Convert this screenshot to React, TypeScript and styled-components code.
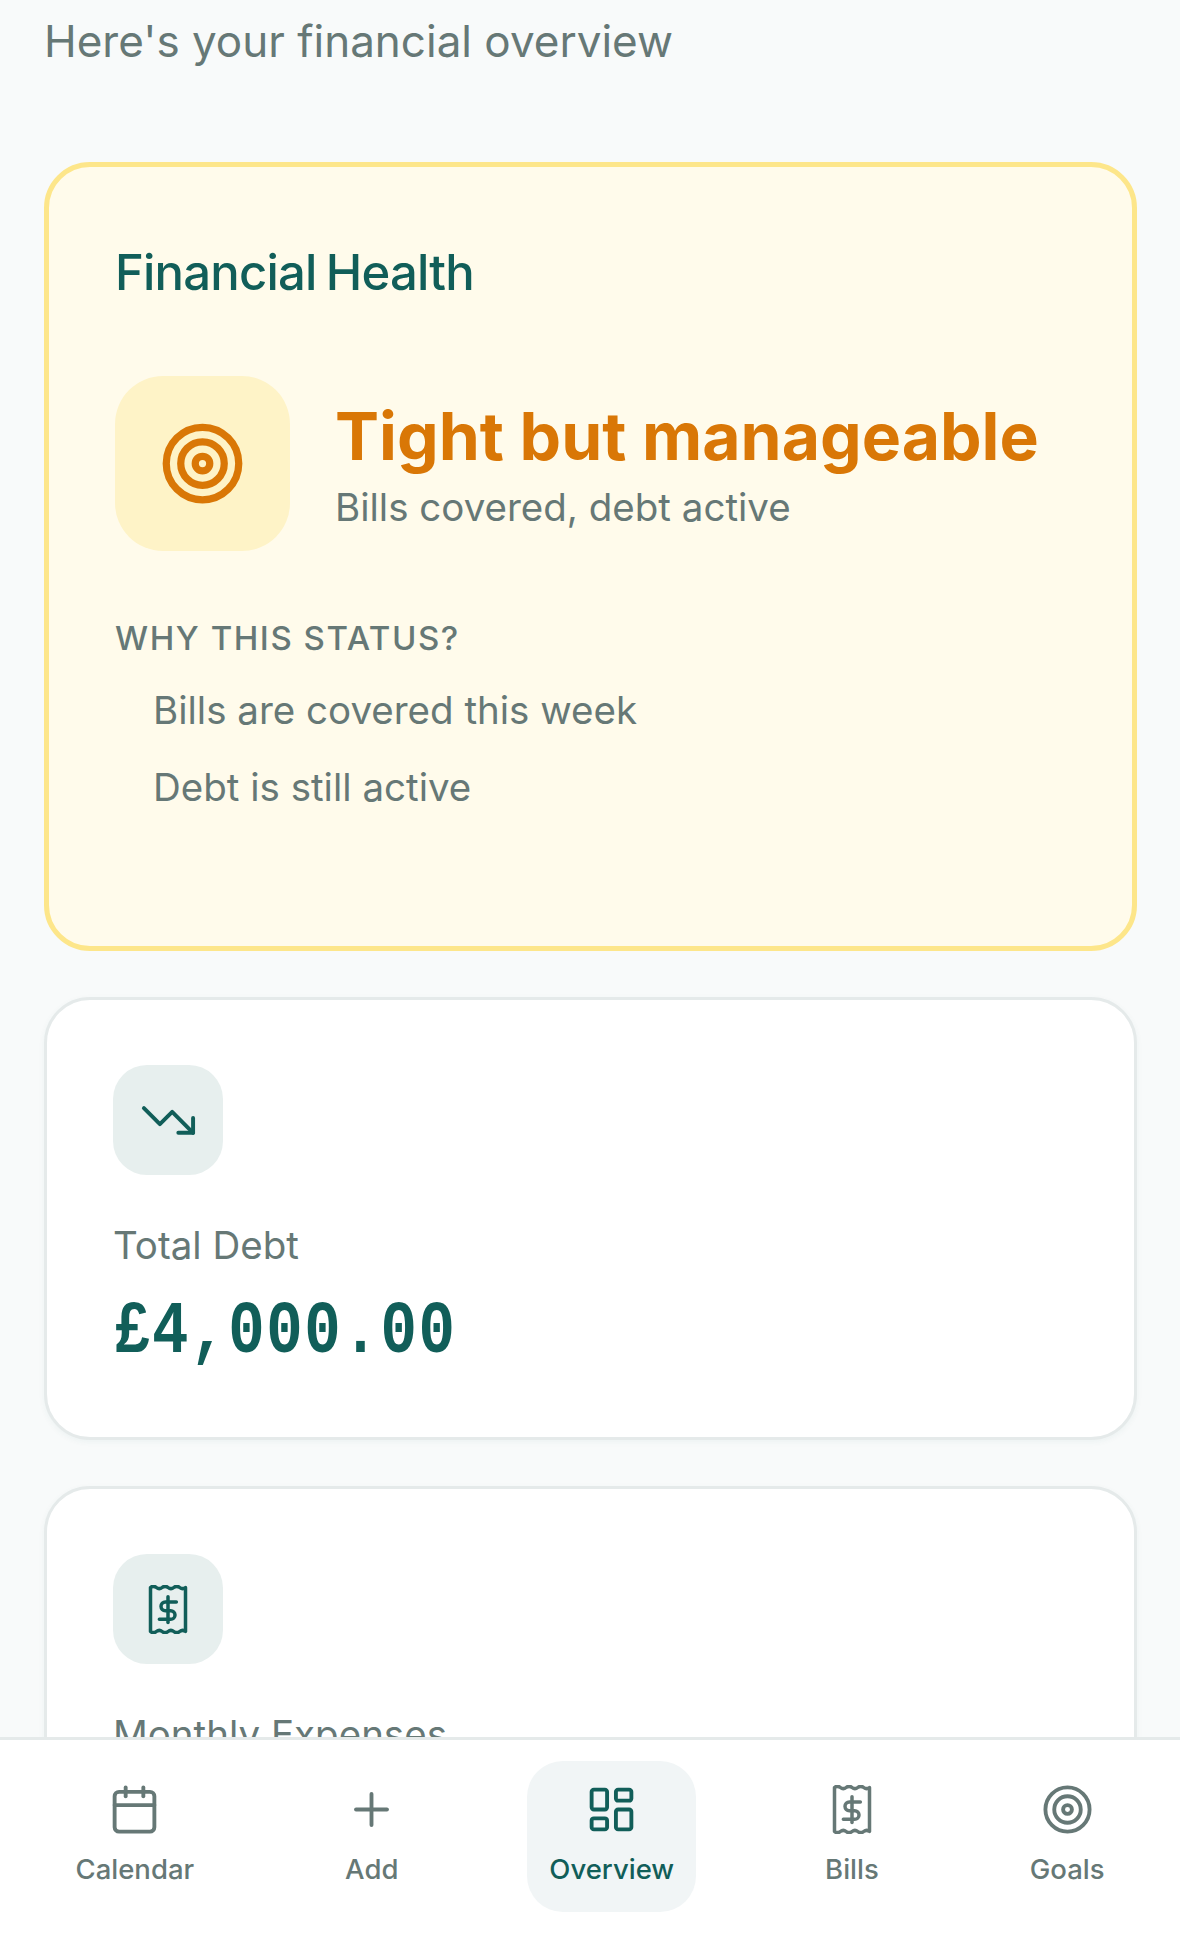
import styled, { createGlobalStyle } from "styled-components";
import { Calendar, LayoutDashboard, Plus, Target, TrendingDown } from "lucide-react";

const GlobalStyle = createGlobalStyle`
  html, body {
    margin: 0;
    padding: 0;
    background: #f8fafa;
  }
  * {
    box-sizing: border-box;
  }
`;

const Page = styled.div`
  width: 1180px;
  height: 1934px;
  display: flex;
  flex-direction: column;
  overflow: hidden;
  background: #f8fafa;
  font-family: Inter, "Liberation Sans", sans-serif;
  color: #667876;
`;

const Content = styled.main`
  flex: 1;
  min-height: 0;
  overflow: hidden;
  padding: 11px 43px 0 44px;
  display: flex;
  flex-direction: column;
  gap: 46px;
`;

const Greeting = styled.p`
  margin: 0 0 45px;
  font-size: 44px;
  line-height: 60px;
`;

const HealthCard = styled.section`
  flex-shrink: 0;
  border: 5px solid #fde68a;
  border-radius: 46px;
  background: #fffbeb;
  padding: 76px 67px 129px 66px;
`;

const HealthTitle = styled.h2`
  margin: 0;
  font-size: 49px;
  line-height: 60px;
  font-weight: 500;
  letter-spacing: -0.8px;
  word-spacing: -3px;
  color: #115e59;
`;

const StatusRow = styled.div`
  display: flex;
  align-items: center;
  gap: 45px;
  margin-top: 73px;
`;

const StatusIcon = styled.div`
  width: 175px;
  height: 175px;
  flex-shrink: 0;
  border-radius: 48px;
  background: #fef3c7;
  color: #d97706;
  display: flex;
  align-items: center;
  justify-content: center;
`;

const StatusText = styled.div`
  display: flex;
  flex-direction: column;
  gap: 5px;
  padding-top: 2px;
`;

const StatusTitle = styled.div`
  font-size: 66px;
  line-height: 80px;
  font-weight: 700;
  color: #d97706;
`;

const StatusSub = styled.div`
  font-size: 38.5px;
  line-height: 52px;
`;

const ReasonsLabel = styled.div`
  margin-top: 64px;
  font-size: 33px;
  line-height: 46px;
  font-weight: 500;
  letter-spacing: 1.55px;
`;

const Reasons = styled.ul`
  list-style: none;
  margin: 19px 0 0;
  padding: 0 0 0 38px;
  display: flex;
  flex-direction: column;
  gap: 17px;
`;

const Reason = styled.li`
  font-size: 38.5px;
  line-height: 60px;
`;

const StatCard = styled.section`
  flex-shrink: 0;
  border: 3px solid #e5eaea;
  border-radius: 46px;
  background: #fff;
  box-shadow: 0 2px 6px rgba(17, 94, 89, 0.05);
  padding: 65px 65px 65px 66px;
`;

const StatIcon = styled.div`
  width: 110px;
  height: 110px;
  border-radius: 34px;
  background: #e7efee;
  color: #115e59;
  display: flex;
  align-items: center;
  justify-content: center;
`;

const StatLabel = styled.div`
  margin-top: 44px;
  font-size: 38.5px;
  line-height: 52px;
`;

const StatValue = styled.div`
  margin: 21px 0 0 1px;
  font-family: "Liberation Mono", monospace;
  font-size: 74px;
  line-height: 80px;
  font-weight: 700;
  letter-spacing: 2px;
  color: #115e59;
  transform: scaleX(0.82);
  transform-origin: left center;
`;

const BottomNav = styled.nav`
  height: 197px;
  flex-shrink: 0;
  border-top: 3px solid #e5eaea;
  background: #fff;
  padding-top: 21px;
  display: flex;
  align-items: flex-start;
  justify-content: space-around;
`;

const NavItem = styled.div<{ $active?: boolean }>`
  height: 151px;
  padding: 24px 22px 0;
  border-radius: 36px;
  display: flex;
  flex-direction: column;
  align-items: center;
  background: ${(p) => (p.$active ? "#f1f5f6" : "transparent")};
  color: ${(p) => (p.$active ? "#115e59" : "#667876")};
`;

const NavIconSlot = styled.div`
  height: 49px;
  display: flex;
  align-items: center;
  justify-content: center;
`;

const NavLabel = styled.span`
  margin-top: 16px;
  font-size: 27.5px;
  line-height: 38px;
  font-weight: 500;
`;

function ReceiptIcon() {
  return (
    <svg width="40" height="49" viewBox="0 0 24 29.4" fill="none" stroke="currentColor" strokeWidth="2.1" strokeLinecap="round" strokeLinejoin="round">
      <path d="M1.5 1.5v26.4q1.75 1.4 3.5 0t3.5 0 3.5 0 3.5 0 3.5 0 3.5 0V1.5q-1.75 1.4-3.5 0t-3.5 0-3.5 0-3.5 0-3.5 0-3.5 0Z" />
      <path d="M12 7v15.5" />
      <path d="M17 10.2h-6.6a2.6 2.6 0 0 0 0 5.2h3.2a2.6 2.6 0 0 1 0 5.2H6.8" />
    </svg>
  );
}

const tabs = [
  { label: "Calendar", icon: <Calendar size={53} strokeWidth={1.75} /> },
  { label: "Add", icon: <Plus size={53} strokeWidth={1.75} /> },
  { label: "Overview", icon: <LayoutDashboard size={53} strokeWidth={1.75} />, active: true },
  { label: "Bills", icon: <ReceiptIcon /> },
  { label: "Goals", icon: <Target size={53} strokeWidth={1.75} /> },
];

export default function App() {
  return (
    <Page>
      <GlobalStyle />
      <Content>
        <Greeting>Here's your financial overview</Greeting>
        <HealthCard>
          <HealthTitle>Financial Health</HealthTitle>
          <StatusRow>
            <StatusIcon>
              <Target size={87} strokeWidth={2} />
            </StatusIcon>
            <StatusText>
              <StatusTitle>Tight but manageable</StatusTitle>
              <StatusSub>Bills covered, debt active</StatusSub>
            </StatusText>
          </StatusRow>
          <ReasonsLabel>WHY THIS STATUS?</ReasonsLabel>
          <Reasons>
            <Reason>Bills are covered this week</Reason>
            <Reason>Debt is still active</Reason>
          </Reasons>
        </HealthCard>
        <StatCard>
          <StatIcon>
            <TrendingDown size={59} strokeWidth={1.6} />
          </StatIcon>
          <StatLabel>Total Debt</StatLabel>
          <StatValue>£4,000.00</StatValue>
        </StatCard>
        <StatCard>
          <StatIcon>
            <ReceiptIcon />
          </StatIcon>
          <StatLabel>Monthly Expenses</StatLabel>
        </StatCard>
      </Content>
      <BottomNav>
        {tabs.map((tab) => (
          <NavItem key={tab.label} $active={tab.active}>
            <NavIconSlot>{tab.icon}</NavIconSlot>
            <NavLabel>{tab.label}</NavLabel>
          </NavItem>
        ))}
      </BottomNav>
    </Page>
  );
}
